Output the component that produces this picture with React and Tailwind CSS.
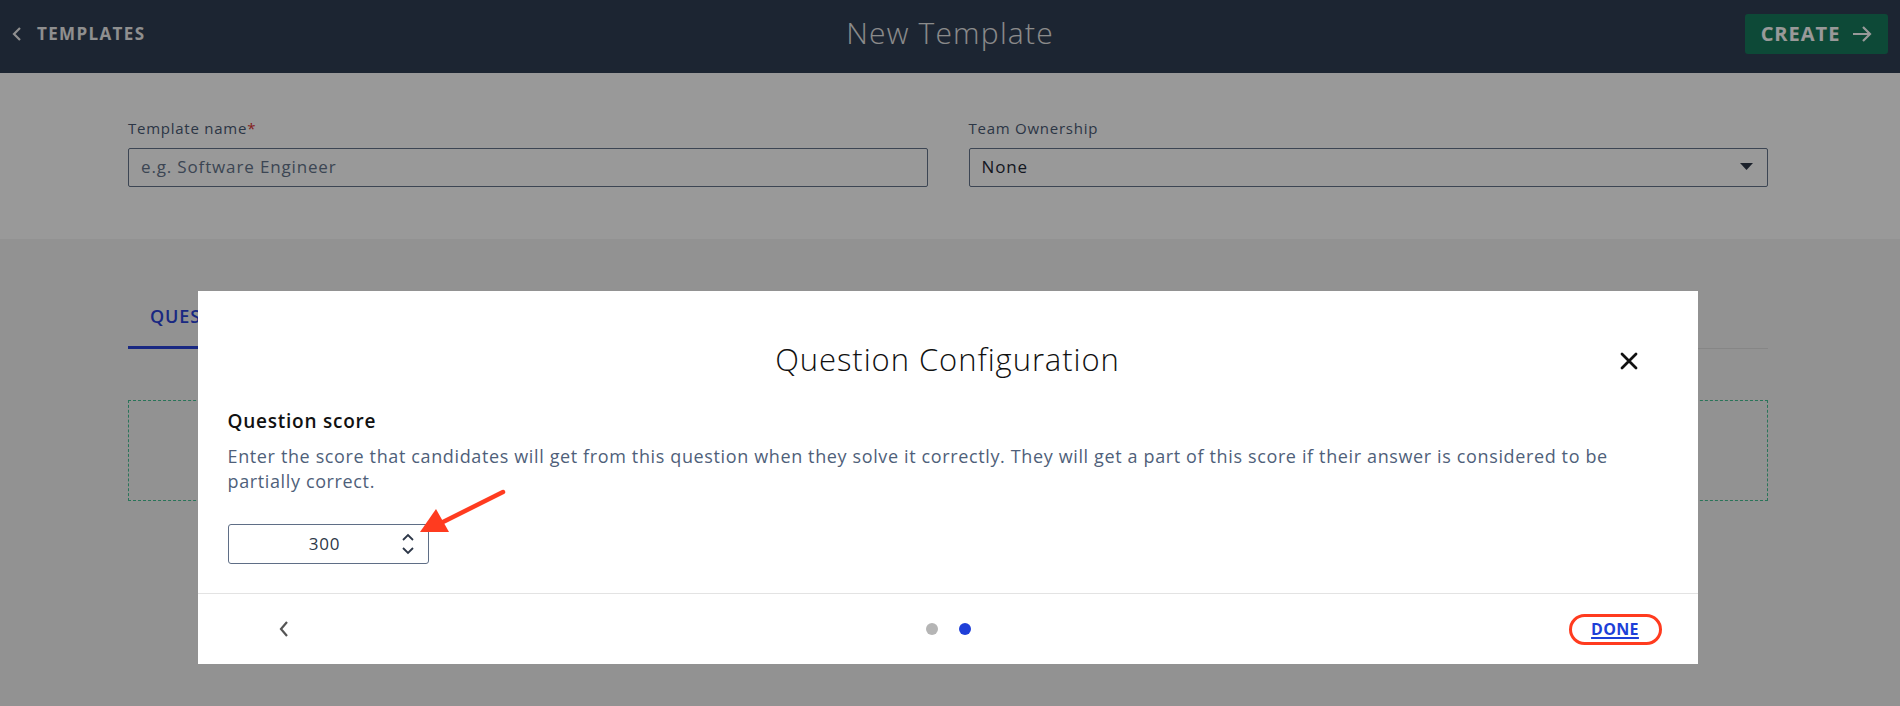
import React from 'react';

const font = "font-['Open_Sans','Noto_Sans',sans-serif]";

export default function App() {
  return (
    <div className={`min-h-screen bg-[#f3f3f3] ${font} relative overflow-hidden`}>
      {/* Top bar */}
      <header className="h-[73px] bg-[#2f3e54] flex items-center justify-between pl-3 pr-3 pb-[6px] relative">
        <div className="flex items-center gap-[15px] text-[#eeeeee]">
          <svg width="10" height="16" viewBox="0 0 10 16" fill="none" stroke="currentColor" strokeWidth="2.2">
            <path d="M8 2 L2 8 L8 14" />
          </svg>
          <span className="text-[17px] font-bold tracking-[0.08em]">TEMPLATES</span>
        </div>
        <h1 className="absolute left-1/2 top-[13px] -translate-x-1/2 text-[30px] leading-[40px] font-light tracking-[0.04em] text-[#e8e8e8]">New Template</h1>
        <button className="h-[40px] w-[143px] bg-[#167b5c] rounded-[3px] flex items-center justify-center gap-[12px] text-white">
          <span className="text-[20px] font-bold tracking-[0.05em]">CREATE</span>
          <svg width="20" height="18" viewBox="0 0 20 18" fill="none" stroke="currentColor" strokeWidth="2.2">
            <path d="M1 9 H18 M11 2 L18 9 L11 16" />
          </svg>
        </button>
      </header>

      {/* Template fields */}
      <section className="bg-white h-[166px] pl-[128px] pr-[132px] pt-[44px] flex gap-[41px]">
        <div className="flex-1">
          <label className="block text-[15px] font-medium tracking-[0.05em] text-[#4a5a74] mb-[8px]">
            Template name<span className="text-[#d33]">*</span>
          </label>
          <div className="h-[39px] border border-[#64748b] rounded-[2px] flex items-center px-[12px] text-[17px] tracking-[0.05em] text-[#64748b]">
            e.g. Software Engineer
          </div>
        </div>
        <div className="flex-1">
          <label className="block text-[15px] font-medium tracking-[0.05em] text-[#4a5a74] mb-[8px]">Team Ownership</label>
          <div className="h-[39px] border border-[#64748b] rounded-[2px] flex items-center justify-between px-[12px] text-[17px] font-medium tracking-[0.05em] text-[#1f2937]">
            <span>None</span>
            <svg width="13" height="8" viewBox="0 0 13 8" className="mr-[2px]">
              <path d="M0 0 H13 L6.5 7 Z" fill="#2d3748" />
            </svg>
          </div>
        </div>
      </section>

      {/* Tabs */}
      <div className="pl-[128px] pr-[132px] pt-[64px]">
        <div className="flex border-b border-[#e0e0e0]">
          <div className="w-[190px] pb-[16px] px-[22px] border-b-[3px] border-[#2b44d9] -mb-px text-[18px] font-semibold tracking-[0.05em] text-[#2b44d9]">
            QUESTIONS
          </div>
        </div>
        <div className="mt-[51px] h-[101px] border border-dashed border-[#45c294]" />
      </div>

      {/* Overlay */}
      <div className="absolute inset-0 bg-black/40 flex justify-center pt-[291px]">
        <div className="relative w-[1500px] h-[373px] bg-white ml-[-5px] flex flex-col">
          <div className="flex-1 px-[30px]">
            <div className="relative h-[117px] flex items-center justify-center">
              <h2 className="text-[31px] font-light tracking-[0.03em] text-[#111] pt-[20px]">Question Configuration</h2>
              <button className="absolute right-[30px] top-[61px]">
                <svg width="18" height="18" viewBox="0 0 18 18" stroke="#111" strokeWidth="2.8" strokeLinecap="round">
                  <path d="M2 2 L16 16 M16 2 L2 16" />
                </svg>
              </button>
            </div>
            <h3 className="text-[19px] font-semibold tracking-[0.04em] text-[#111] leading-[26px]">Question score</h3>
            <p className="mt-[10px] text-[18px] font-medium tracking-[0.035em] leading-[25px] text-[#4f5f7a] pr-[30px]">
              Enter the score that candidates will get from this question when they solve it correctly. They will get a part of this score if their answer is considered to be partially correct.
            </p>
            <div className="mt-[30px] w-[201px] h-[40px] border border-[#5f6e86] rounded-[3px] flex items-center relative">
              <span className="flex-1 text-center text-[17px] font-medium tracking-[0.05em] text-[#2d3748] pl-[20px]">300</span>
              <svg width="14" height="22" viewBox="0 0 14 22" fill="none" stroke="#2d3748" strokeWidth="1.8" className="mr-[13px]">
                <path d="M2 7 L7 2 L12 7 M2 15 L7 20 L12 15" />
              </svg>
            </div>
          </div>

          {/* Red annotation arrow */}
          <svg className="absolute left-[215px] top-[195px]" width="100" height="55" viewBox="0 0 100 55">
            <path d="M90 6 L28 37" stroke="#ff3b1f" strokeWidth="4.5" strokeLinecap="round" />
            <path d="M7 46 L23 23 L36 46 Z" fill="#ff3b1f" />
          </svg>

          {/* Footer */}
          <div className="h-[71px] border-t border-[#e3e3e3] grid grid-cols-3 items-center pl-[80px] pr-[36px]">
            <svg width="12" height="18" viewBox="0 0 12 18" fill="none" stroke="#555" strokeWidth="2.2">
              <path d="M9 2 L3 9 L9 16" />
            </svg>
            <div className="flex justify-center gap-[21px] ml-[-41px]">
              <span className="w-[12px] h-[12px] rounded-full bg-[#b5b5b5]" />
              <span className="w-[12px] h-[12px] rounded-full bg-[#1f3fd8]" />
            </div>
            <div className="flex justify-end">
              <button className="w-[93px] h-[31px] rounded-full border-[3px] border-[#ff3b1f] flex items-center justify-center">
                <span className="text-[16px] font-bold tracking-[0.02em] text-[#1d3fd8] underline underline-offset-2 decoration-2">DONE</span>
              </button>
            </div>
          </div>
        </div>
      </div>
    </div>
  );
}
